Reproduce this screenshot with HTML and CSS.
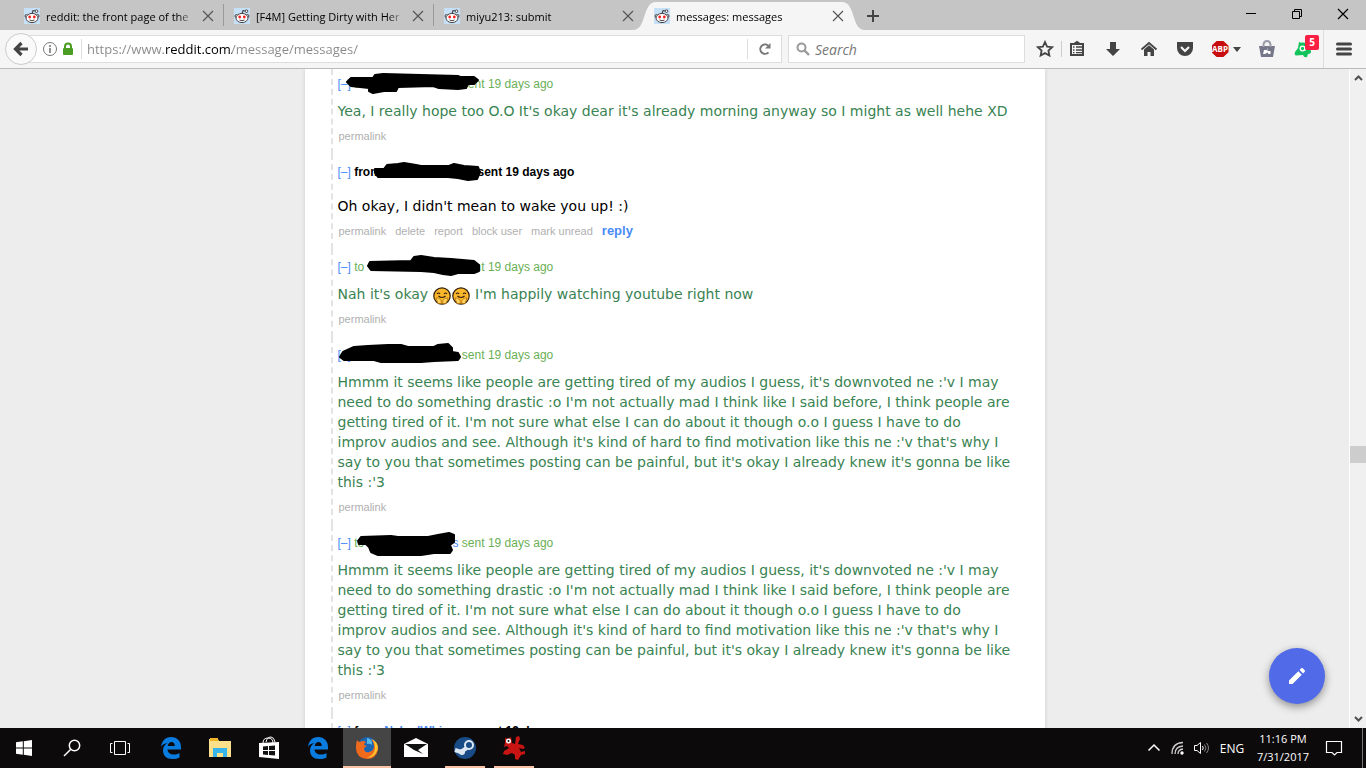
FILE: index.html
```html
<!DOCTYPE html>
<html lang="en">
<head>
    <meta charset="UTF-8">
    <meta name="viewport" content="width=device-width, initial-scale=1.0">
    <title>messages: messages</title>
    <link rel="stylesheet" href="styles.css">
</head>
<body>
    <!-- Shared icons -->
    <svg class="sprite" aria-hidden="true">
        <symbol id="snoo" viewBox="0 0 16 16">
            <rect width="16" height="16" fill="#c6e0f7"/>
            <path d="M8 6 9 2.500l3 .5" fill="none" stroke="#444" stroke-width="1.100"/>
            <circle cx="12.500" cy="3.200" r="1.300" fill="#fff" stroke="#444"/>
            <circle cx="2.500" cy="8" r="1.500" fill="#fff" stroke="#444"/>
            <circle cx="13.500" cy="8" r="1.500" fill="#fff" stroke="#444"/>
            <ellipse cx="8" cy="10" rx="6" ry="4.600" fill="#fff" stroke="#444"/>
            <circle cx="5.700" cy="9" r="1.400" fill="#f22"/>
            <circle cx="10.300" cy="9" r="1.400" fill="#f22"/>
            <path d="M5.500 12q2.500 1.500 5 0" fill="none" stroke="#444"/>
        </symbol>
        <symbol id="cross" viewBox="0 0 16 16">
            <path d="M3 3 13 13M13 3 3 13" fill="none" stroke="currentColor" stroke-width="1.200"/>
        </symbol>
        <symbol id="edge" viewBox="0 0 20 22">
            <path d="M0 10C.6 4 4.500 0 10 0c6.500 0 10 4.500 10 10v2.500H6.500c.2 3.500 3 5 6 5 2.300 0 4.300-.6 6-1.600v4.600C16.500 21.500 14 22 11.500 22 5.500 22 2 18.500 2 13.500 2 10 3.800 7.500 6.500 6 3.500 6.300 1.300 7.500 0 10zM6.700 9h7.100c0-2.500-1.300-4-3.400-4-2 0-3.400 1.700-3.700 4z" fill="#0a7ce0"/>
        </symbol>
        <symbol id="hug" viewBox="0 0 18 18">
            <circle cx="9" cy="9" r="8.200" fill="#fdb72b" stroke="#33210b" stroke-width="1.200"/>
            <path d="M4 7q1.500-2 3 0M11 7q1.500-2 3 0M5.500 9q3.500 3 7 0" fill="none" stroke="#33210b" stroke-width="1.200"/>
            <path d="M3 11q3-.5 5 2l.5 3.500H5zM15 11q-3-.5-5 2l-.5 3.500H13z" fill="#ffd35c" stroke="#b0690a" stroke-width=".7"/>
        </symbol>
    </svg>

    <header>
        <!-- Tab strip -->
        <div class="tab-strip">
            <div class="tab">
                <svg class="favicon"><use href="#snoo"/></svg>
                <span class="tab-title">reddit: the front page of the</span>
                <button class="tab-close" aria-label="Close tab"><svg><use href="#cross"/></svg></button>
            </div>
            <div class="tab">
                <svg class="favicon"><use href="#snoo"/></svg>
                <span class="tab-title">[F4M] Getting Dirty with Her</span>
                <button class="tab-close" aria-label="Close tab"><svg><use href="#cross"/></svg></button>
            </div>
            <div class="tab no-line">
                <svg class="favicon"><use href="#snoo"/></svg>
                <span class="tab-title">miyu213: submit</span>
                <button class="tab-close" aria-label="Close tab"><svg><use href="#cross"/></svg></button>
            </div>
            <div class="tab active">
                <svg class="tab-shape" viewBox="0 0 232 28" preserveAspectRatio="none">
                    <path d="M0 28C14 28 9 0 23 0H209C223 0 218 28 232 28z" fill="#f5f5f5"/>
                </svg>
                <svg class="favicon"><use href="#snoo"/></svg>
                <span class="tab-title">messages: messages</span>
                <button class="tab-close" aria-label="Close tab"><svg><use href="#cross"/></svg></button>
            </div>
            <button class="new-tab" aria-label="New tab">
                <svg viewBox="0 0 14 14"><path d="M7 1v12M1 7h12" stroke="#444" stroke-width="2"/></svg>
            </button>
            <div class="window-buttons">
                <button aria-label="Minimize"><svg viewBox="0 0 12 12"><path d="M1 5.500h10" stroke="#000"/></svg></button>
                <button aria-label="Restore"><svg viewBox="0 0 12 12"><path d="M1.500 3.500h7v7h-7zM3.500 3.500v-2h7v7h-2" fill="none" stroke="#000"/></svg></button>
                <button aria-label="Close"><svg viewBox="0 0 12 12"><path d="M1 1l10 10M11 1 1 11" stroke="#000" stroke-width="1.200"/></svg></button>
            </div>
        </div>

        <!-- Navigation toolbar -->
        <div class="toolbar">
            <button class="back" aria-label="Back">
                <svg viewBox="0 0 16 16"><path d="M8.500 2 2.500 8l6 6M3 8h12" fill="none" stroke="#444" stroke-width="3.200"/></svg>
            </button>
            <div class="url-bar">
                <svg class="info" viewBox="0 0 16 16">
                    <circle cx="8" cy="8" r="6.500" fill="none" stroke="#777"/>
                    <path d="M8 7v5M8 4v2" stroke="#777" stroke-width="1.600"/>
                </svg>
                <svg class="lock" viewBox="0 0 12 14">
                    <path d="M3 7V4.500a3 3 0 0 1 6 0V7" fill="none" stroke="#4a9c23" stroke-width="2"/>
                    <rect x="1" y="6" width="10" height="7" rx="1" fill="#4a9c23"/>
                </svg>
                <input class="url" type="text" aria-label="Address" value="https://www.reddit.com/message/messages/">
                <button class="reload" aria-label="Reload">
                    <svg viewBox="0 0 14 14"><path d="M10.500 10.300A4.700 4.700 0 1 1 10 3.500" fill="none" stroke="#777" stroke-width="2"/><path d="M12.500 1v5.500H7z" fill="#777"/></svg>
                </button>
            </div>
            <div class="search-bar">
                <svg viewBox="0 0 14 14"><circle cx="5.500" cy="5.500" r="4" fill="none" stroke="#999" stroke-width="2"/><path d="M8.500 8.500 13 13" stroke="#999" stroke-width="2.400"/></svg>
                <input type="text" aria-label="Search" placeholder="Search">
            </div>
            <div class="tools">
                <button class="star" aria-label="Bookmark">
                    <svg viewBox="0 0 18 18"><path d="M9 2l2.100 4.600 5 .6-3.700 3.400 1 5L9 13.100l-4.400 2.500 1-5L1.900 7.200l5-.6z" fill="none" stroke="#444" stroke-width="1.800"/></svg>
                </button>
                <button aria-label="Bookmarks list">
                    <svg viewBox="0 0 18 18"><path d="M3 4h12v11H3zM6 4l3-2 3 2" fill="none" stroke="#444" stroke-width="2"/><path d="M5 7h1.500M8 7h6M5 10h1.500M8 10h6M5 12.700h1.500M8 12.700h6" stroke="#444" stroke-width="1.300"/></svg>
                </button>
                <button aria-label="Downloads">
                    <svg viewBox="0 0 18 18"><path d="M6 2h6v7h4l-7 7-7-7h4z" fill="#444"/></svg>
                </button>
                <button aria-label="Home">
                    <svg viewBox="0 0 18 18"><path d="M1.500 9.500 9 3l7.500 6.500" fill="none" stroke="#444" stroke-width="1.800"/><path d="M4 9.500 9 5.300l5 4.200V16h-3.500v-4h-3v4H4z" fill="#444"/></svg>
                </button>
                <button aria-label="Pocket">
                    <svg viewBox="0 0 18 18"><path d="M1 2h16v6a8 8 0 0 1-16 0z" fill="#444"/><path d="M5 7l4 4 4-4" fill="none" stroke="#f5f5f5" stroke-width="2.200"/></svg>
                </button>
                <button class="abp" aria-label="Adblock Plus">
                    <span>ABP</span>
                    <svg class="caret" viewBox="0 0 8 5"><path d="M0 0h8L4 5z" fill="#444"/></svg>
                </button>
                <button aria-label="Add-on">
                    <svg viewBox="0 0 18 18"><path d="M1 6h16l-2 11H3z" fill="#77778a"/><path d="M5.500 7V4.500Q6 1 9 1t3.500 3.500V7" fill="none" stroke="#9c9cab" stroke-width="2"/><path d="M9.500 7v4h3v3h-2l-1-1.500L7 14H5l1-4h3z" fill="#fff"/></svg>
                </button>
                <button class="avast" aria-label="Avast">
                    <svg viewBox="0 0 18 18"><path d="M5 2q2 1 4 .5 4 0 4.500 4L17 11q.5 3-3 3l-1 3q-3 1-4-2l-7 .5q-2-1-1-3.500L4 8z" fill="#12c35b"/><circle cx="8.500" cy="8.500" r="2.300" fill="none" stroke="#fff" stroke-width="1.300"/><path d="M11 6v5" stroke="#fff"/></svg>
                    <span class="badge">5</span>
                </button>
                <button class="menu" aria-label="Open menu">
                    <svg viewBox="0 0 18 18"><path d="M2.500 4h13M2.500 9h13M2.500 14h13" stroke="#444" stroke-width="3" stroke-linecap="round"/></svg>
                </button>
            </div>
        </div>
    </header>

    <div class="viewport">
        <main>
            <article class="message sent first">
                <p class="tagline">
                    <a href="#">[–]</a> to <span class="name"></span> sent 19 days ago
                    <svg class="marker" viewBox="0 0 160 24"><path d="M13 6 35 6 37 3 45 2 120 4 122 5 136 5 140 8 136 12 130 12 128 16 120 17 101 16 95 14 60 15 58 19 46 19 35 21 31 19 31 16 13 14 9 10z"/></svg>
                </p>
                <p class="text">Yea, I really hope too O.O It's okay dear it's already morning anyway so I might as well hehe XD</p>
                <p class="buttons"><a href="#">permalink</a></p>
            </article>

            <article class="message received">
                <p class="tagline">
                    <a href="#">[–]</a> from <span class="name"></span> sent 19 days ago
                    <svg class="marker" viewBox="0 0 160 24"><path d="M37 9 46 9 49 5 60 4 66 3 78 5 83 6 111 6 116 4 126 6 140 7 142 12 139 19 130 20 120 18 110 17 40 17 37 13z"/></svg>
                </p>
                <p class="text">Oh okay, I didn't mean to wake you up! :)</p>
                <p class="buttons"><a href="#">permalink</a><a href="#">delete</a><a href="#">report</a><a href="#">block user</a><a href="#">mark unread</a><a class="reply" href="#">reply</a></p>
            </article>

            <article class="message sent">
                <p class="tagline">
                    <a href="#">[–]</a> to <span class="name"></span> sent 19 days ago
                    <svg class="marker" viewBox="0 0 160 24"><path d="M30 11 32 7 73 6 76 2 83 1 96 3 113 4 136 6 141 10 141 16 136 18 120 18 113 20 105 19 96 17 83 16 33 15z"/></svg>
                </p>
                <p class="text">Nah it's okay <svg class="emoji"><use href="#hug"/></svg><svg class="emoji"><use href="#hug"/></svg> I'm happily watching youtube right now</p>
                <p class="buttons"><a href="#">permalink</a></p>
            </article>

            <article class="message sent">
                <p class="tagline">
                    <a href="#">[–]</a> to <span class="name"></span> sent 19 days ago
                    <svg class="marker" viewBox="0 0 160 24"><path d="M2 14 5 9 16 4 30 3 50 2 63 2 70 4 96 4 100 2 110 1 114 5 114 9 120 10 122 14 120 17 96 18 83 19 43 19 36 17 6 17z"/></svg>
                </p>
                <p class="text">Hmmm it seems like people are getting tired of my audios I guess, it's downvoted ne :'v I may need to do something drastic :o I'm not actually mad I think like I said before, I think people are getting tired of it. I'm not sure what else I can do about it though o.o I guess I have to do improv audios and see. Although it's kind of hard to find motivation like this ne :'v that's why I say to you that sometimes posting can be painful, but it's okay I already knew it's gonna be like this :'3</p>
                <p class="buttons"><a href="#">permalink</a></p>
            </article>

            <article class="message sent">
                <p class="tagline">
                    <a href="#">[–]</a> to <span class="name">s</span> sent 19 days ago
                    <svg class="marker" viewBox="0 0 160 24"><path d="M20 10 23 6 53 5 60 6 90 6 100 4 111 2 116 4 116 11 112 14 114 19 112 22 96 22 83 24 40 24 33 21 31 16 28 13 21 13z"/></svg>
                </p>
                <p class="text">Hmmm it seems like people are getting tired of my audios I guess, it's downvoted ne :'v I may need to do something drastic :o I'm not actually mad I think like I said before, I think people are getting tired of it. I'm not sure what else I can do about it though o.o I guess I have to do improv audios and see. Although it's kind of hard to find motivation like this ne :'v that's why I say to you that sometimes posting can be painful, but it's okay I already knew it's gonna be like this :'3</p>
                <p class="buttons"><a href="#">permalink</a></p>
            </article>

            <article class="message received">
                <p class="tagline"><a href="#">[–]</a> from <a class="author" href="#">NakedWhispers</a> sent 19 days ago</p>
            </article>
        </main>

        <button class="compose" aria-label="Compose">
            <svg viewBox="0 0 24 24"><path d="M4 16.500V20h3.500L16.800 10.700 13.300 7.200zM14.600 5.900l3.500 3.500 1.600-1.600q.8-.8 0-1.600l-1.900-1.900q-.8-.8-1.600 0z" fill="#fff"/></svg>
        </button>

        <div class="scrollbar">
            <svg viewBox="0 0 9 6"><path d="M1 5l3.500-3.500L8 5" fill="none" stroke="#505050" stroke-width="2"/></svg>
            <div class="track"><div class="thumb"></div></div>
            <svg viewBox="0 0 9 6"><path d="M1 1l3.500 3.500L8 1" fill="none" stroke="#505050" stroke-width="2"/></svg>
        </div>
    </div>

    <!-- Taskbar -->
    <footer>
        <div class="system">
            <button aria-label="Start"><svg viewBox="0 0 24 24"><path d="M4 6.300 10.800 5.300V11.500H4zM11.800 5.200 20 4V11.500H11.800zM4 12.500h6.800v6.200L4 17.700zM11.800 12.500H20V20l-8.200-1.200z" fill="#fff"/></svg></button>
            <button aria-label="Search"><svg viewBox="0 0 24 24"><circle cx="14.500" cy="9.500" r="5.200" fill="none" stroke="#fff" stroke-width="1.500"/><path d="M10.800 13.200 4 20" stroke="#fff" stroke-width="1.500"/></svg></button>
            <button aria-label="Task view"><svg viewBox="0 0 24 24"><path d="M6.500 5.500h11v13h-11zM4.500 7.500h-2v9h2M19.500 7.500h2v9h-2" fill="none" stroke="#fff"/></svg></button>
        </div>
        <div class="apps">
            <button aria-label="Edge"><svg class="edge"><use href="#edge"/></svg></button>
            <button aria-label="File Explorer"><svg viewBox="0 0 24 24"><path d="M1 3h9l1 2h12v16H1z" fill="#ffe08a"/><path d="M2 2h8v3H2z" fill="#f0b429"/><path d="M5 21v-9h14v9h-4v-4H9v4z" fill="#37b5ea"/></svg></button>
            <button aria-label="Store"><svg viewBox="0 0 24 24"><path d="M2 7l20-1v17L2 21z" fill="#fff"/><path d="M6 7q0-5 5-5t5 5M9 6q1-5 5-5 3 0 4 5" fill="none" stroke="#fff"/><path d="M6 10.500l5-.5v4H6zM12 10l6-.5V14h-6zM6 15h5v4l-5-.5zM12 15h6v4.500l-6-.5z" fill="#111"/></svg></button>
            <button aria-label="Edge"><svg class="edge"><use href="#edge"/></svg></button>
            <button class="current" aria-label="Firefox"><svg viewBox="0 0 24 24"><circle cx="12.500" cy="11" r="10" fill="#1b66b3"/><path d="M12 2q6 1 5 7-2-2-5-1z" fill="#56b7e6"/><path d="M2 4q1 2 3 2 3-2 6 0-2 1-2 3l3 1q-3 1-3 3 1 4 5 3 5-1 5-6 0-4-3-7 8 3 7 11-2 9-11 9Q1 22 1 12q0-5 1-8z" fill="#ef6a1d"/><path d="M17 3q8 5 5 12-3 7-10 7 7-3 8-9 0-6-3-10z" fill="#ffc62e"/></svg></button>
            <button aria-label="Mail"><svg viewBox="0 0 24 24"><path d="M0 8 12 2l12 6v13H0z" fill="#fff"/><path d="M1 8h22l-9 6 5 4-9-4z" fill="#111"/></svg></button>
            <button class="open" aria-label="Steam"><svg viewBox="0 0 24 24"><circle cx="12" cy="12" r="11" fill="#194b86"/><path d="M2 14l6 2 7-5" fill="none" stroke="#dce7f2" stroke-width="4"/><circle cx="16" cy="9" r="4" fill="#194b86" stroke="#dce7f2" stroke-width="2"/><circle cx="9" cy="16" r="3" fill="#dce7f2"/></svg></button>
            <button class="open" aria-label="IrfanView"><svg viewBox="0 0 24 24"><path d="M3 2l3 1 3-2 1 6 3 1 1-7 3-1 1 3-2 5 5 1 2 3-2 1-4-1 2 4 4-1v3l-4 1-3 5-3-1v-4l-3-2-5 2-4-1 1-3 5-3-2-2-3 1 1-4z" fill="#c81412"/><circle cx="6.500" cy="5" r="2.500" fill="#fff"/><circle cx="6.500" cy="5" r="1" fill="#111"/></svg></button>
        </div>
        <div class="tray">
            <button aria-label="Show hidden icons"><svg viewBox="0 0 16 16"><path d="M2.500 10.500 8 5l5.500 5.500" fill="none" stroke="#fff" stroke-width="1.500"/></svg></button>
            <button aria-label="Network"><svg viewBox="0 0 16 16"><path d="M2 14Q2 3 13 2.500M5 14q0-7.500 8-8M8 14q0-4.500 5-5" fill="none" stroke="#ccc" stroke-width="1.300"/><circle cx="12" cy="13" r="1.700" fill="#fff"/></svg></button>
            <button aria-label="Volume"><svg viewBox="0 0 16 16"><path d="M.5 5.500h2.500l3.500-3v11L3 10.500H.5z" fill="none" stroke="#fff"/><path d="M8.500 6q1.500 2 0 4" fill="none" stroke="#fff"/><path d="M10.500 4.500q3 3.500 0 7M12.500 3q4 5 0 10" fill="none" stroke="#888"/></svg></button>
            <button class="lang">ENG</button>
            <time class="clock" datetime="2017-07-31T23:16">11:16 PM<br>7/31/2017</time>
            <button class="action" aria-label="Action center"><svg viewBox="0 0 18 18"><path d="M1.500 2.500h15v11H12L9.500 16 7 13.500H1.500z" fill="none" stroke="#fff" stroke-width="1.200"/></svg></button>
        </div>
    </footer>
</body>
</html>
```
FILE: styles.css
```css
* {
    box-sizing: border-box;
}
body {
    font-family: "Open Sans", sans-serif;
    margin: 0;
    height: 100vh;
    display: flex;
    flex-direction: column;
    overflow: hidden;
    background-color: #ededed;
    color: #000;
}
p {
    margin: 0;
}
a {
    text-decoration: none;
}
button {
    display: flex;
    align-items: center;
    justify-content: center;
    padding: 0;
    border: none;
    background: none;
    font-family: inherit;
    cursor: pointer;
}
input {
    min-width: 0;
    padding: 0;
    border: none;
    outline: none;
    background: none;
    font-family: inherit;
}
svg {
    flex: none;
}
.sprite {
    position: absolute;
    width: 0;
    height: 0;
}

/* Tabs */
.tab-strip {
    display: flex;
    height: 30px;
    padding-left: 14px;
    background-color: #c5c5c5;
}
.tab {
    position: relative;
    display: flex;
    align-items: center;
    gap: 6px;
    width: 210px;
    padding: 2px 8px 0 10px;
    font-size: 11px;
}
.tab:not(.active):not(.no-line) {
    background: linear-gradient(#999, #999) right 0 bottom 4px / 1px 22px no-repeat;
}
.tab > * {
    position: relative;
}
.tab .tab-shape {
    position: absolute;
    left: -11px;
    bottom: 0;
    width: calc(100% + 22px);
    height: 28px;
}
.favicon,
.tab-close svg {
    width: 16px;
    height: 16px;
}
.tab-title {
    flex: 1;
    overflow: hidden;
    white-space: nowrap;
    mask-image: linear-gradient(to left, transparent, #000 16px);
}
.tab-close {
    color: #555;
}
.new-tab {
    width: 38px;
    padding-top: 2px;
}
.new-tab svg {
    width: 14px;
    height: 14px;
}
.window-buttons {
    display: flex;
    height: 28px;
    margin-left: auto;
}
.window-buttons button {
    width: 46px;
}
.window-buttons svg {
    width: 12px;
    height: 12px;
}

/* Toolbar */
.toolbar {
    display: flex;
    align-items: center;
    height: 39px;
    padding-left: 5px;
    background-color: #f5f5f5;
    border-bottom: 1px solid #bbb;
}
.back {
    z-index: 1;
    width: 32px;
    height: 32px;
    margin-right: -16px;
    border: 1px solid #ccc;
    border-radius: 50%;
    background-color: #fafafa;
}
.back svg {
    width: 16px;
    height: 16px;
}
.url-bar,
.search-bar {
    display: flex;
    align-items: center;
    height: 28px;
    border: 1px solid #ddd;
    background-color: #fff;
}
.url-bar {
    flex: 1;
    padding-left: 20px;
}
.info {
    width: 16px;
    height: 16px;
}
.lock {
    width: 12px;
    height: 14px;
    margin: 0 7px 0 4px;
}
.url {
    flex: 1;
    height: 20px;
    padding-left: 5px;
    border-left: 1px solid #ddd;
    font-size: 13px;
    color: transparent;
    background: linear-gradient(to right, #888 84px, #000 84px, #000 150px, #888 150px);
    background-clip: text;
    -webkit-background-clip: text;
}
.reload {
    width: 34px;
    height: 20px;
    border-left: 1px solid #ddd;
}
.reload svg,
.search-bar svg {
    width: 14px;
    height: 14px;
}
.search-bar {
    gap: 5px;
    width: 237px;
    margin-left: 6px;
    padding-left: 7px;
}
.search-bar input {
    flex: 1;
    font-size: 14px;
}
.search-bar input::placeholder {
    color: #777;
    font-style: italic;
}
.tools {
    display: flex;
    height: 38px;
    padding-left: 6px;
}
.tools button {
    position: relative;
    width: 36px;
}
.tools svg {
    width: 18px;
    height: 18px;
}
.tools .star {
    width: 28px;
}
.tools .star + button {
    background: linear-gradient(#ccc, #ccc) 2px center / 1px 16px no-repeat;
}
.tools .abp {
    gap: 4px;
    width: 46px;
}
.abp span {
    width: 17px;
    height: 16px;
    background-color: #c70d0d;
    clip-path: polygon(30% 0, 70% 0, 100% 30%, 100% 70%, 70% 100%, 30% 100%, 0 70%, 0 30%);
    color: #fff;
    font-size: 8px;
    font-weight: bold;
    line-height: 16px;
}
.tools .caret {
    width: 8px;
    height: 5px;
}
.badge {
    position: absolute;
    top: 5px;
    right: 2px;
    width: 14px;
    border-radius: 2px;
    background-color: #fb1f43;
    color: #fff;
    font-size: 10px;
    font-weight: bold;
    line-height: 15px;
}
.tools .menu {
    width: 45px;
    background: linear-gradient(#ddd, #ddd) 2px center / 1px 100% no-repeat;
}

/* Messages */
.viewport {
    position: relative;
    flex: 1;
    display: flex;
    min-height: 0;
    overflow: hidden;
}
main {
    width: 100%;
    max-width: 740px;
    height: max-content;
    margin: 0 auto;
    padding: 0 26px;
    background-color: #fff;
    box-shadow: 0 0 4px rgba(0, 0, 0, 0.15);
}
.message {
    padding: 10px 0 10px 5px;
    border-left: 2px dashed #e3e3e3;
    font-family: "Liberation Sans", Arial, sans-serif;
}
.first {
    padding-top: 7px;
}
.tagline {
    position: relative;
    font-size: 12px;
    line-height: 16px;
    white-space: nowrap;
}
.tagline a,
.name {
    color: #4a8cf7;
}
.name {
    display: inline-block;
    width: 91px;
    text-align: right;
}
.sent .tagline {
    color: #6aaf55;
}
.received .tagline {
    font-weight: bold;
}
.received .tagline a:first-child {
    font-weight: normal;
}
.received .name {
    width: 90px;
}
.marker {
    position: absolute;
    top: -4px;
    left: 0;
    width: 160px;
    height: 24px;
    overflow: visible;
    fill: #000;
    stroke: #000;
    stroke-width: 2px;
    stroke-linejoin: round;
}
.text {
    max-width: 675px;
    margin-top: 9px;
    font-family: "DejaVu Sans", Verdana, sans-serif;
    font-size: 14px;
    line-height: 20px;
}
.sent .text {
    color: #3a8352;
}
.received .text {
    margin-top: 16px;
}
.emoji {
    width: 18px;
    height: 18px;
    margin: -2px 1px -2px 0;
    vertical-align: -4px;
}
.buttons {
    display: flex;
    gap: 9px;
    margin-top: 7px;
    padding-left: 1px;
    font-size: 11px;
    line-height: 16px;
}
.buttons a {
    color: #b0b0b0;
}
.buttons .reply {
    color: #4a8cf7;
    font-size: 13px;
    font-weight: bold;
}
.compose {
    position: absolute;
    right: 41px;
    bottom: 24px;
    width: 56px;
    height: 56px;
    border-radius: 50%;
    background-color: #506ae8;
    box-shadow: 0 3px 8px rgba(0, 0, 0, 0.4);
}
.compose svg {
    width: 24px;
    height: 24px;
}
.scrollbar {
    display: flex;
    flex-direction: column;
    align-items: center;
    width: 17px;
    padding: 6px 0;
    border-left: 1px solid #fff;
    background-color: #f0f0f0;
}
.scrollbar svg {
    width: 9px;
    height: 6px;
}
.track {
    flex: 1;
    width: 100%;
    padding-top: 365px;
}
.thumb {
    height: 17px;
    background-color: #cdcdcd;
}

/* Taskbar */
footer {
    display: flex;
    height: 40px;
    background-color: #0c0a0b;
    color: #fff;
}
.system,
.apps,
.tray {
    display: flex;
}
.system button,
.apps button {
    width: 48px;
    height: 40px;
}
.system svg,
.apps svg {
    width: 24px;
    height: 24px;
}
.apps {
    gap: 1px;
    margin-left: 3px;
}
.apps .edge {
    width: 20px;
    height: 22px;
}
.apps .current {
    background-color: #464546;
    box-shadow: inset 0 -2px #fbc3a5;
}
.apps .open {
    background: linear-gradient(#fbc3a5, #fbc3a5) center bottom / 40px 2px no-repeat;
}
.tray {
    align-items: center;
    margin-left: auto;
    margin-right: 3px;
    border-right: 1px solid #777;
}
.tray button {
    width: 24px;
    height: 40px;
    color: #fff;
}
.tray svg {
    width: 16px;
    height: 16px;
}
.tray .lang {
    width: 36px;
    font-size: 12px;
}
.clock {
    width: 66px;
    font-size: 11px;
    line-height: 18px;
    text-align: center;
}
.tray .action {
    width: 46px;
    padding-right: 10px;
}
.tray .action svg {
    width: 18px;
    height: 18px;
}
```
